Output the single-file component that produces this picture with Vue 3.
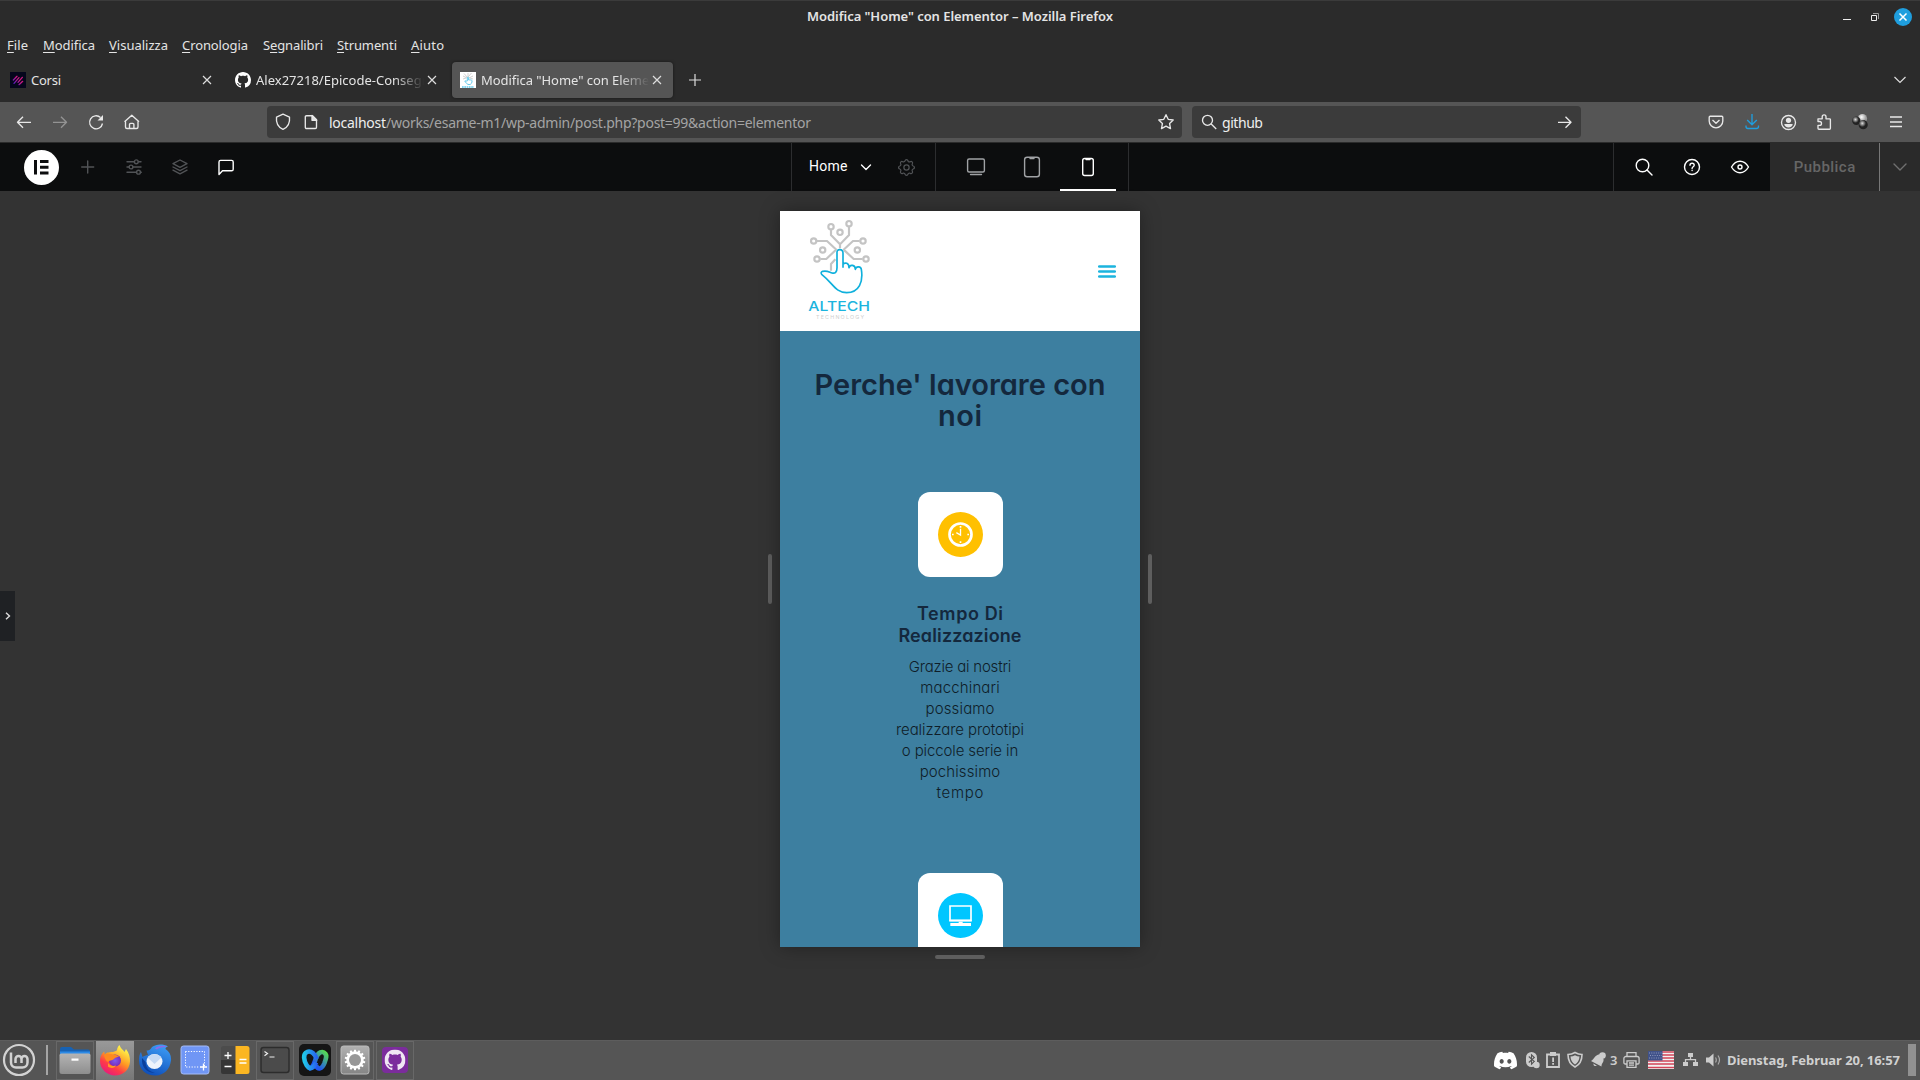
<script setup>
// Spreads a label's letters so that it takes the given width in px.
const vFit = {
  mounted(el, { value }) {
    const n = el.textContent.length
    if (n < 2) return
    const natural = el.getBoundingClientRect().width
    el.style.letterSpacing = ((value - natural) / (n - 1)).toFixed(3) + 'px'
    el.style.marginRight = (-(value - natural) / (n - 1)).toFixed(3) + 'px'
  },
}

const menus = [
  { pre: '', key: 'F', rest: 'ile', w: 21, box: 36 },
  { pre: '', key: 'M', rest: 'odifica', w: 52, box: 66 },
  { pre: '', key: 'V', rest: 'isualizza', w: 59, box: 73 },
  { pre: '', key: 'C', rest: 'ronologia', w: 66, box: 81 },
  { pre: 'S', key: 'e', rest: 'gnalibri', w: 60, box: 74 },
  { pre: '', key: 'S', rest: 'trumenti', w: 60, box: 74 },
  { pre: '', key: 'A', rest: 'iuto', w: 33, box: 40 },
]

const body = [
  ['Grazie ai nostri', 102.5],
  ['macchinari', 79.5],
  ['possiamo', 69],
  ['realizzare prototipi', 128],
  ['o piccole serie in', 116.5],
  ['pochissimo', 80.5],
  ['tempo', 47],
]

const github =
  'M8 0C3.58 0 0 3.58 0 8c0 3.54 2.29 6.53 5.47 7.59.4.07.55-.17.55-.38 0-.19-.01-.82-.01-1.49-2.01.37-2.53-.49-2.69-.94-.09-.23-.48-.94-.82-1.13-.28-.15-.68-.52-.01-.53.63-.01 1.08.58 1.23.82.72 1.21 1.87.87 2.33.66.07-.52.28-.87.51-1.07-1.78-.2-3.64-.89-3.64-3.95 0-.87.31-1.59.82-2.15-.08-.2-.36-1.02.08-2.12 0 0 .67-.21 2.2.82.64-.18 1.32-.27 2-.27.68 0 1.36.09 2 .27 1.53-1.04 2.2-.82 2.2-.82.44 1.1.16 1.92.08 2.12.51.56.82 1.27.82 2.15 0 3.07-1.87 3.75-3.65 3.95.29.25.54.73.54 1.48 0 1.07-.01 1.93-.01 2.2 0 .21.15.46.55.38A8.013 8.013 0 0016 8c0-4.42-3.58-8-8-8z'
const discord =
  'M20.317 4.3698a19.7913 19.7913 0 00-4.8851-1.5152.0741.0741 0 00-.0785.0371c-.211.3753-.4447.8648-.6083 1.2495-1.8447-.2762-3.68-.2762-5.4868 0-.1636-.3933-.4058-.8742-.6177-1.2495a.077.077 0 00-.0785-.037 19.7363 19.7363 0 00-4.8852 1.515.0699.0699 0 00-.0321.0277C.5334 9.0458-.319 13.5799.0992 18.0578a.0824.0824 0 00.0312.0561c2.0528 1.5076 4.0413 2.4228 5.9929 3.0294a.0777.0777 0 00.0842-.0276c.4616-.6304.8731-1.2952 1.226-1.9942a.076.076 0 00-.0416-.1057c-.6528-.2476-1.2743-.5495-1.8722-.8923a.077.077 0 01-.0076-.1277c.1258-.0943.2517-.1923.3718-.2914a.0743.0743 0 01.0776-.0105c3.9278 1.7933 8.18 1.7933 12.0614 0a.0739.0739 0 01.0785.0095c.1202.099.246.1981.3728.2924a.077.077 0 01-.0066.1276 12.2986 12.2986 0 01-1.873.8914.0766.0766 0 00-.0407.1067c.3604.698.7719 1.3628 1.225 1.9932a.076.076 0 00.0842.0286c1.961-.6067 3.9495-1.5219 6.0023-3.0294a.077.077 0 00.0313-.0552c.5004-5.177-.8382-9.6739-3.5485-13.6604a.061.061 0 00-.0312-.0286zM8.02 15.3312c-1.1825 0-2.1569-1.0857-2.1569-2.419 0-1.3332.9555-2.4189 2.157-2.4189 1.2108 0 2.1757 1.0952 2.1568 2.419 0 1.3332-.9555 2.4189-2.1569 2.4189zm7.9748 0c-1.1825 0-2.1569-1.0857-2.1569-2.419 0-1.3332.9554-2.4189 2.1569-2.4189 1.2108 0 2.1757 1.0952 2.1568 2.419 0 1.3332-.946 2.4189-2.1568 2.4189Z'

const gear = (teeth, rOut, rIn, c) => {
  const pts = []
  for (let i = 0; i < teeth; i++) {
    for (const [f, r] of [[-0.3, rIn], [-0.2, rOut], [0.2, rOut], [0.3, rIn]]) {
      const a = ((i + f) / teeth) * Math.PI * 2
      pts.push((c + r * Math.sin(a)).toFixed(2) + ',' + (c - r * Math.cos(a)).toFixed(2))
    }
  }
  return pts.join(' ')
}
const settingsGear = gear(14, 10.4, 8.6, 16)
const nodes = [[183, 80], [237, 71], [131, 123], [279, 123], [141, 177], [288, 177], [210, 97], [158, 150], [262, 150]]
</script>

<template>
  <div class="screen">
    <header class="titlebar">
      <span class="win-title"><span v-fit="306">Modifica "Home" con Elementor – Mozilla Firefox</span></span>
      <div class="win-btns">
        <svg width="10" height="10" viewBox="0 0 10 10"><rect x="1" y="7" width="8" height="1" fill="#eee" /></svg>
        <svg class="restore" width="10" height="10" viewBox="0 0 10 10" fill="none"><path d="M1.500 3.500h5v5h-5z" stroke="#eee" /><path d="M3 1.500h5.500v5.500" stroke="#999" /></svg>
        <svg width="18" height="18" viewBox="0 0 18 18"><circle cx="9" cy="9" r="9" fill="#1f9ede" /><path d="M5.500 5.500l7 7m0-7l-7 7" stroke="#fff" stroke-width="1.500" /></svg>
      </div>
    </header>

    <nav class="menubar">
      <div v-for="m in menus" :key="m.rest" class="menu" :style="{ width: m.box + 'px' }">
        <span v-fit="m.w">{{ m.pre }}<u>{{ m.key }}</u>{{ m.rest }}</span>
      </div>
    </nav>

    <div class="tabs">
      <div class="tab">
        <svg width="16" height="16" viewBox="0 0 48 48">
          <defs><linearGradient id="ep" gradientUnits="userSpaceOnUse" x1="10" y1="38" x2="38" y2="12"><stop offset=".1" stop-color="#5a1cc0" /><stop offset=".6" stop-color="#d01880" /></linearGradient></defs>
          <rect width="48" height="48" fill="#05061c" />
          <path d="M10 24l11-11M12 34L27 17M24 31L37 16M27 38l11-10" stroke="url(#ep)" stroke-width="4" fill="none" stroke-linecap="round" />
        </svg>
        <div class="tab-text"><span v-fit="30">Corsi</span></div>
        <svg class="close" width="10" height="10" viewBox="0 0 10 10"><path d="M1 1l8 8m0-8l-8 8" /></svg>
      </div>
      <div class="tab">
        <svg width="16" height="16" viewBox="0 0 16 16"><path :d="github" fill="#fff" /></svg>
        <div class="tab-text cut"><span v-fit="181">Alex27218/Epicode-Consegne</span></div>
        <svg class="close" width="10" height="10" viewBox="0 0 10 10"><path d="M1 1l8 8m0-8l-8 8" /></svg>
      </div>
      <div class="tab active">
        <svg width="16" height="16" viewBox="0 0 16 16">
          <rect width="16" height="16" fill="#fff" />
          <path d="M4 1.500l3.500 4M11.500 1l-3.500 4M3 4l4 2M13 4L9 6M8 1v4M3 7l3-1M13 7L9.500 6" stroke="#ccc" stroke-width=".9" />
          <path d="M7.300 9V5.500q.7-.8 1.300 0V8c1.500-.3 3 0 3.500.6 0 2-.8 4-3 4-2 0-3.300-2-4.300-3.600 1-.5 1.700.4 2.500 0z" stroke="#5fc8ea" fill="none" />
          <path d="M2 15h12" stroke="#5fc8ea" stroke-width="1.300" stroke-dasharray="1.700 .6" />
        </svg>
        <div class="tab-text cut"><span v-fit="194">Modifica "Home" con Elementor</span></div>
        <svg class="close" width="10" height="10" viewBox="0 0 10 10"><path d="M1 1l8 8m0-8l-8 8" /></svg>
      </div>
      <svg class="new-tab" width="14" height="14" viewBox="0 0 14 14"><path d="M7 1v12M1 7h12" /></svg>
      <svg class="tab-list" width="14" height="14" viewBox="0 0 14 14"><path d="M1.500 4l5.500 5.500L12.500 4" /></svg>
    </div>

    <div class="toolbar">
      <div class="icons nav">
        <svg viewBox="0 0 20 20"><path d="M17 10.300H3.500M9 4.800L3.500 10.300 9 15.800" /></svg>
        <svg viewBox="0 0 20 20" class="off"><path d="M3 10.300h13.500M11 4.800l5.500 5.500-5.500 5.500" /></svg>
        <svg viewBox="0 0 20 20"><path d="M16.500 11.500a6.500 6.500 0 1 1-2-6" /><path d="M17 3v5.500h-5.500z" fill="#e8e8e8" stroke="none" /></svg>
        <svg viewBox="0 0 20 20"><path d="M3.500 9.500V15a1.500 1.500 0 0 0 1.500 1.500h9.500A1.500 1.500 0 0 0 16 15V9.500M2.500 9.800L9.800 3.200 17 9.800M7.500 16.500v-4a1.200 1.200 0 0 1 1.200-1.200h2a1.200 1.200 0 0 1 1.200 1.200v4" /></svg>
      </div>
      <div class="field url">
        <svg viewBox="0 0 20 20"><path d="M10 2.200l6.500 2.900c.5 4.500-1.200 9.900-6.500 12.300C4.700 15 3 9.600 3.500 5.100z" /></svg>
        <svg viewBox="0 0 20 20" class="doc"><path d="M5.500 3.700h6l4 4v7.600a1.200 1.200 0 0 1-1.200 1.200H5.500a1.200 1.200 0 0 1-1.200-1.200V4.900a1.200 1.200 0 0 1 1.200-1.200z" /><path d="M11 3.500v4.700h4.700z" fill="#ddd" /></svg>
        <span v-fit="57" class="host">localhost</span><span v-fit="425" class="path">/works/esame-m1/wp-admin/post.php?post=99&amp;action=elementor</span>
        <svg viewBox="0 0 20 20" class="star"><path d="M10 2.700l2.200 4.600 5 .7-3.600 3.600.9 5-4.500-2.400-4.500 2.400.9-5L2.800 8l5-.7z" /></svg>
      </div>
      <div class="field search">
        <svg viewBox="0 0 20 20"><circle cx="8.500" cy="8.300" r="5" /><path d="M12.200 12l5 5" /></svg>
        <span v-fit="41" class="host">github</span>
        <svg viewBox="0 0 20 20" class="go"><path d="M3 10.300h13M10.500 4.800L16 10.300l-5.500 5.500" /></svg>
      </div>
      <div class="icons ext">
        <svg viewBox="0 0 20 20"><path d="M4.200 4.200h11.600a1 1 0 0 1 1 1V9a6.800 6.800 0 0 1-13.600 0V5.200a1 1 0 0 1 1-1zM6.500 8l3.500 3.300L13.500 8" /></svg>
        <svg viewBox="0 0 20 20" class="dl"><path d="M10 2v10.500M5.200 8l4.800 4.800L14.800 8M4 13.500v1a2 2 0 0 0 2 2h8.500a2 2 0 0 0 2-2v-1" /></svg>
        <svg viewBox="0 0 20 20"><circle cx="10.500" cy="10.500" r="7" /><circle cx="10.500" cy="8.300" r="2.600" fill="#e8e8e8" stroke="none" /><path d="M6.300 12h8.400c0 2-2 3.500-4.200 3.500s-4.200-1.500-4.200-3.500z" fill="#e8e8e8" stroke="none" /></svg>
        <svg viewBox="0 0 20 20"><path d="M4 6.800h4.200V4.700a1.900 1.900 0 0 1 3.800 0v2.100h3.500a.9.900 0 0 1 .9.900v8.600a.9.900 0 0 1-.9.900H4.900a.9.900 0 0 1-.9-.9v-3h1.600a1.900 1.900 0 0 0 0-3.800H4z" /></svg>
        <svg viewBox="0 0 20 20" class="balls">
          <defs>
            <radialGradient id="b1" cx=".4" cy=".35"><stop offset="0" stop-color="#fff" /><stop offset="1" stop-color="#999" /></radialGradient>
            <radialGradient id="b2" cx=".4" cy=".35"><stop offset="0" stop-color="#ddd" /><stop offset=".8" stop-color="#222" /></radialGradient>
          </defs>
          <circle cx="12.500" cy="6.500" r="4.600" fill="url(#b1)" /><circle cx="6.300" cy="8.800" r="4.200" fill="url(#b2)" /><circle cx="13.200" cy="12.700" r="4.600" fill="url(#b2)" />
        </svg>
        <svg viewBox="0 0 20 20"><path d="M4 5h12M4 10h12M4 14.500h12" /></svg>
      </div>
    </div>

    <div class="ebar">
      <svg class="elogo" width="35" height="35" viewBox="0 0 35 35"><circle cx="17.500" cy="17.500" r="17.500" fill="#fff" /><path d="M10 10h3v14.500h-3zM16 10h8.500v3H16zM16 15.700h8.500v3H16zM16 21.500h8.500v3H16z" fill="#0c0d0e" /></svg>
      <div class="tools">
        <svg class="dim" viewBox="0 0 24 24"><path d="M11.700 6v12M5.700 12h12" /></svg>
        <svg class="dim" viewBox="0 0 24 24"><path d="M5 6.800h7.500M16.500 6.800H19M5 12h2M11 12h8M5 17.200h9.500M18.500 17.200h.8" /><circle cx="14.300" cy="6.800" r="1.900" /><circle cx="9" cy="12" r="1.900" /><circle cx="16.500" cy="17.200" r="1.900" /></svg>
        <svg class="dim" viewBox="0 0 24 24"><path d="M12 5l7 3.700-7 3.700-7-3.700zM5 12l7 3.700 7-3.700M5 15.200l7 3.700 7-3.700" /></svg>
        <svg viewBox="0 0 24 24"><path d="M5 19.500V7a1.600 1.600 0 0 1 1.600-1.600h11A1.600 1.600 0 0 1 19.200 7v7.200a1.600 1.600 0 0 1-1.600 1.600H8.500z" /></svg>
      </div>
      <div class="page">
        <span v-fit="38.500">Home</span>
        <svg class="chev" width="14" height="14" viewBox="0 0 14 14"><path d="M2.500 5L7 9.500 11.500 5" /></svg>
        <svg class="dim" width="21" height="21" viewBox="0 0 24 24">
          <path d="M10.300 4.300c.4-1.700 3-1.700 3.400 0a1.700 1.700 0 0 0 2.600 1.100c1.500-1 3.300.8 2.400 2.300a1.700 1.700 0 0 0 1 2.600c1.800.4 1.800 3 0 3.400a1.700 1.700 0 0 0-1 2.600c.9 1.500-.9 3.300-2.400 2.400a1.700 1.700 0 0 0-2.600 1c-.4 1.800-3 1.800-3.400 0a1.700 1.700 0 0 0-2.600-1c-1.500.9-3.300-.9-2.400-2.400a1.700 1.700 0 0 0-1-2.600c-1.800-.4-1.800-3 0-3.400a1.700 1.700 0 0 0 1-2.600c-.9-1.500.9-3.300 2.400-2.300 1 .6 2.300 0 2.600-1.100z" /><circle cx="12" cy="12" r="3" />
        </svg>
      </div>
      <div class="devices">
        <div class="dev"><svg viewBox="0 0 24 24"><rect x="3.600" y="4" width="16.800" height="13" rx="1.500" /><path d="M6.500 19.500h11" /></svg></div>
        <div class="dev"><svg viewBox="0 0 24 24"><rect x="4.600" y="2.200" width="14.800" height="19.600" rx="2.500" /><path d="M10 3.500h4" /></svg></div>
        <div class="dev on"><svg viewBox="0 0 24 24"><rect x="6.700" y="3.500" width="10.600" height="17" rx="2" /><path d="M10 4.500h4" /></svg></div>
      </div>
      <div class="eright">
        <div class="act"><svg viewBox="0 0 24 24"><circle cx="10.500" cy="10.500" r="6.300" /><path d="M15 15l5 5" /></svg></div>
        <div class="act"><svg viewBox="0 0 24 24"><circle cx="12" cy="12" r="7.500" /><path d="M10 10.200c0-2.600 4.200-2.600 4.200 0 0 1.500-2.100 1.500-2.100 3.200M12.100 15.300v.2" /></svg></div>
        <div class="act"><svg viewBox="0 0 24 24"><path d="M3.500 12c4.500-7.600 12.500-7.600 17 0-4.500 7.600-12.500 7.600-17 0z" /><circle cx="12" cy="12" r="2" /></svg></div>
      </div>
      <div class="publish"><span v-fit="61.500">Pubblica</span></div>
      <div class="pubmore"><svg width="16" height="16" viewBox="0 0 16 16"><path d="M2 5l6 6 6-6" /></svg></div>
    </div>

    <main class="canvas">
      <div class="toggle"><svg width="6" height="8" viewBox="0 0 6 8"><path d="M1 .7L4.500 4 1 7.300" /></svg></div>
      <div class="stage">
        <div class="stage-row">
          <i class="handle v"></i>
          <div class="phone">
            <div class="site-head">
              <svg class="brand-logo" width="66" height="106" viewBox="111 51 198 318" fill="none">
                <g stroke="#c4c4c4" stroke-width="6.500">
                  <circle v-for="(n, i) in nodes" :key="i" :cx="n[0]" :cy="n[1]" r="8" />
                  <path d="M183 90v15l27 28M237 81v24l-27 28v12M141 123h30l29 27M269 123h-20l-29 27M151 177h18l29-28M278 177h-27l-30-28M183 212v-20l13-14" />
                </g>
                <path stroke="#0fb0dc" stroke-width="5" stroke-linejoin="round" d="M219 203v-43q0-11-9.500-11T201 160v43c0 14-6 18-15 16-9-3-15-8-28-5q-7 3-3 9c35 28 42 55 75 55 38 0 50-33 44-70-1-8-15-12-18 0 0-14-16-16-19-5 0-15-12-16-17-11" />
                <text x="115" y="333" textLength="185" lengthAdjust="spacingAndGlyphs" class="brand">ALTECH</text>
                <text x="138" y="357" textLength="144" class="sub">TECHNOLOGY</text>
              </svg>
              <svg class="burger" width="18" height="14" viewBox="0 0 18 14"><path d="M1.200 1.500h15.600M1.200 6.500h15.600M1.200 11.600h15.600" stroke="#1cb4de" stroke-width="2.500" stroke-linecap="round" /></svg>
            </div>
            <div class="section">
              <h2><span v-fit="291">Perche' lavorare con</span><br /><span v-fit="44">noi</span></h2>
              <div class="card">
                <svg width="45" height="45" viewBox="0 0 135 135" fill="none" stroke="#fff">
                  <circle cx="67.500" cy="67.500" r="67.500" fill="#ffc000" stroke="none" />
                  <circle cx="67.500" cy="67.500" r="33" stroke-width="8" />
                  <path d="M67.500 50v19L55 62" stroke-width="4" /><path d="M67.500 42v5M67.500 88v5M42 67.500h5M88 67.500h5" stroke-width="5" />
                </svg>
              </div>
              <h3><span v-fit="86">Tempo Di</span><br /><span v-fit="123">Realizzazione</span></h3>
              <p><template v-for="l in body" :key="l[0]"><span v-fit="l[1]">{{ l[0] }}</span><br /></template></p>
              <div class="card second">
                <svg width="45" height="45" viewBox="0 0 135 135" fill="none" stroke="#fff">
                  <circle cx="67.500" cy="67.500" r="67.500" fill="#00c6ff" stroke="none" />
                  <path d="M36 39h63v43H36z" stroke-width="5" /><path d="M34 83h67" stroke-width="5" /><path d="M62 86h12v4H62z" fill="#fff" stroke="none" /><path d="M37 94.500h62" stroke-width="9" />
                </svg>
              </div>
            </div>
          </div>
          <i class="handle v"></i>
        </div>
        <i class="handle h"></i>
      </div>
    </main>

    <footer class="taskbar">
      <svg class="mint" width="34" height="34" viewBox="0 0 34 34" fill="none" stroke="#d2d2d2"><circle cx="17" cy="17" r="15" stroke-width="2.200" /><path d="M9 9.500v10a5 5 0 0 0 5 5h6.500a5 5 0 0 0 5-5V16a3 3 0 0 0-6 0v4M19.500 16a3 3 0 0 0-6 0v4" stroke-width="2.500" /></svg>
      <i class="sep"></i>
      <div class="app framed">
        <svg width="32" height="32" viewBox="0 0 32 32">
          <defs><linearGradient id="fm" x1="0" y1="0" x2="0" y2="1"><stop offset="0" stop-color="#b4b4b4" /><stop offset="1" stop-color="#8e8e8e" /></linearGradient></defs>
          <path d="M1 5a2 2 0 0 1 2-2h9l3 2.500h14a2 2 0 0 1 2 2V12H1z" fill="#1762b4" /><path d="M1 7.500h30V12H1z" fill="#2c8ae6" />
          <path d="M.5 12A2 2 0 0 1 2.500 9.500h27a2 2 0 0 1 2 2.500v15.500A2.500 2.500 0 0 1 29 30H3a2.500 2.500 0 0 1-2.500-2.500z" fill="url(#fm)" /><path d="M12.500 14.500h7v2.200h-7z" fill="#fff" />
        </svg>
      </div>
      <div class="app current">
        <svg width="32" height="32" viewBox="0 0 32 32">
          <defs>
            <linearGradient id="ff1" x1=".8" y1="0" x2=".2" y2="1"><stop offset=".1" stop-color="#fff04a" /><stop offset=".45" stop-color="#ff9a22" /><stop offset=".7" stop-color="#ff3b47" /><stop offset="1" stop-color="#e31587" /></linearGradient>
            <radialGradient id="ff2"><stop offset="0" stop-color="#7a5cf0" /><stop offset="1" stop-color="#7a2bb8" /></radialGradient>
          </defs>
          <path d="M20.500 1c1 3.500 3.500 4.500 5 7l1.500-3c3 4 4.200 8 4 12.500C30.500 26 24 31.500 16 31.500S1 25 1 17c0-4 1.500-7.500 4.200-9.500l.6 3C7 9 8 8.500 9.500 8.500 13 8 17.500 7.500 18 6c.3-2 1-3.800 2.500-5z" fill="url(#ff1)" />
          <circle cx="16" cy="16.500" r="6" fill="url(#ff2)" /><path d="M5 11c3-2 6-1.500 9-.5 3 0 5 1 6 2-2 1-4 1-5 2.500-2 2-5 1-6 3-2-1-3.500-4-4-7z" fill="#ff8a20" /><path d="M9 19c2 3 5 3.500 8 2.500-1 2.500-5 3.500-8 1z" fill="#ff9a22" />
        </svg>
      </div>
      <div class="app">
        <svg width="34" height="32" viewBox="0 0 34 32">
          <defs><linearGradient id="tb" x1=".7" y1="0" x2=".3" y2="1"><stop offset="0" stop-color="#3d9cf5" /><stop offset="1" stop-color="#0d4db8" /></linearGradient></defs>
          <path d="M14 3C18 0 25-.5 30 2.500 28 3 27.500 4 27.500 5c4 2.500 6 6.500 5.500 11.500C32 25 26 31.500 17.500 31.500 8 31.500 1 25.500 1 17c0-4 .5-7 2-9l1.500 5C6 12 8 11 10 11L8.500 6.500C11 7 13 5 14 3z" fill="url(#tb)" />
          <path d="M4 14c-1 9 5 15 13 15-6-1.500-9-5-9.500-11z" fill="#0a3f9c" /><ellipse cx="16.500" cy="17.500" rx="8" ry="7.500" fill="#eef4fc" /><path d="M9.500 13.500l7 6.500 7-6.500c-3-4.500-11-4.500-14 0z" fill="#c5daf4" /><path d="M17 4.500c3-3 9-3.500 12-1.500-4 0-8 .5-10 2.500z" fill="#8d6ae8" />
        </svg>
      </div>
      <div class="app">
        <svg width="32" height="32" viewBox="0 0 32 32"><rect x="2" y="2" width="28" height="28" rx="2.500" fill="#7096f5" stroke="#a6bdf8" /><path d="M6.500 7.500h19v15M6.500 7.500v15.500h14" stroke="#fff" fill="none" stroke-dasharray="1.200 1.500" /><path d="M24.500 19.500v7M21 23h7" stroke="#fff" stroke-width="1.300" /></svg>
      </div>
      <div class="app">
        <svg width="32" height="32" viewBox="0 0 32 32"><rect x="2" y="2" width="28.500" height="28" rx="2.500" fill="#4c4c4c" /><path d="M2 16h15v14H4.500A2.500 2.500 0 0 1 2 27.500z" fill="#363636" /><path d="M16.500 2H28a2.500 2.500 0 0 1 2.500 2.500v23A2.500 2.500 0 0 1 28 30H16.500z" fill="#fbb622" /><path d="M5.500 11.500h7M9 8v7M5.500 22.500h7M20.500 15.500h7M20.500 19h7" stroke="#fff" stroke-width="1.300" /></svg>
      </div>
      <div class="app framed">
        <svg width="32" height="32" viewBox="0 0 32 32" fill="none"><rect x="2" y="3.500" width="28" height="25" rx="2.500" fill="#4b4b4b" stroke="#2c2c2c" stroke-width="1.400" /><path d="M5.500 7.500l3 2-3 2.200M10.500 13h5" stroke="#eee" stroke-width="1.200" /></svg>
      </div>
      <div class="app">
        <svg width="32" height="32" viewBox="0 0 32 32" fill="none">
          <defs>
            <linearGradient id="wx1"><stop offset="0" stop-color="#20c5e8" /><stop offset="1" stop-color="#2864f0" /></linearGradient>
            <linearGradient id="wx2" x1="0" y1="1" x2="1" y2="0"><stop offset=".3" stop-color="#2056f0" /><stop offset="1" stop-color="#58dc50" /></linearGradient>
          </defs>
          <rect width="32" height="32" rx="5" fill="#151515" />
          <path d="M17 21.500c2 4.500 6 4 8.500-2.500 1.500-4.500 2.500-7 1-9-3-4-7.500-1.500-9.500 4-2 5.500-3 10.500-7 10.500" stroke="url(#wx2)" stroke-width="4.600" />
          <path d="M17.500 15c-1-4.500-5.500-9-9.500-7-4.500 2-3 8.500-.5 13 3.500 5.500 7.500 3 9.500-2.500" stroke="url(#wx1)" stroke-width="4.600" />
        </svg>
      </div>
      <div class="app framed">
        <svg width="32" height="32" viewBox="0 0 32 32">
          <defs><linearGradient id="st" x1="0" y1="0" x2="0" y2="1"><stop offset="0" stop-color="#b0b0b0" /><stop offset="1" stop-color="#858585" /></linearGradient></defs>
          <rect x="2" y="2" width="28" height="28" rx="2.500" fill="url(#st)" stroke="#bcbcbc" /><polygon :points="settingsGear" fill="#fff" /><circle cx="16" cy="16" r="6" fill="#989898" />
        </svg>
      </div>
      <div class="app framed">
        <svg width="32" height="32" viewBox="0 0 32 32"><rect x="3" y="3" width="26" height="26" rx="4" fill="#7b2c9c" /><svg x="5.500" y="5.500" width="21" height="21" viewBox="0 0 16 16"><path :d="github" fill="#efe6f3" /></svg></svg>
      </div>

      <div class="tray">
        <svg width="23" height="23" viewBox="0 0 24 24"><path :d="discord" fill="#fff" /></svg>
        <svg class="t-bt" width="14" height="18" viewBox="0 0 14 18"><rect x="0" y="1" width="11" height="15" rx="5.500" fill="#ccc" /><path d="M2.800 5.500l5.500 5-2.800 2.700V3.800L8.300 6.500l-5.500 5" stroke="#555" stroke-width="1.100" fill="none" /><circle cx="10.500" cy="14" r="3.200" fill="#ccc" /></svg>
        <svg class="t-clip" width="14" height="18" viewBox="0 0 14 18"><path d="M1 3.500h12v12.500H1z" fill="none" stroke="#ccc" stroke-width="1.800" /><path d="M4 1h6v4H4zM6.200 6.500h1.800v4.500H6.200zM6.200 12h1.800v1.800H6.200z" fill="#ccc" /></svg>
        <svg class="t-shield" width="16" height="18" viewBox="0 0 16 18"><path d="M8 1.500c2 1.200 4.500 2 7 2 0 5.500-2 10-7 12.500C3 13.500 1 9 1 3.500c2.500 0 5-.8 7-2z" fill="none" stroke="#ccc" stroke-width="1.600" /><path d="M8 4.300c1.500.8 3 1.200 4.500 1.300C12.300 9 11 11.800 8 13.500 5 11.800 3.700 9 3.500 5.600 5 5.500 6.500 5.100 8 4.300z" fill="#ccc" /></svg>
        <svg class="t-bell" width="15" height="18" viewBox="0 0 15 18"><path d="M0 10C3.500 8.500 3.500 4 8.500 3.300l4 4.500C13 12 10.500 12 10.500 15.500z" fill="#ccc" /><circle cx="11.500" cy="4.500" r="3.300" fill="#ccc" /><path d="M2.500 12.500q-.5 3 3.500 2.500z" fill="#ccc" /></svg>
        <span class="count">3</span>
        <svg class="t-print" width="17" height="18" viewBox="0 0 17 18" fill="none" stroke="#ccc" stroke-width="1.300"><path d="M4 5V1.600h9V5M3.500 13H2.200A1.300 1.300 0 0 1 .9 11.700V7.500a2 2 0 0 1 2-2h11.200a2 2 0 0 1 2 2v4.200a1.300 1.300 0 0 1-1.300 1.300h-1.300M4 9.800h9v6.600H4zM6 12h5M6 14.200h5" /></svg>
        <svg class="t-flag" width="26" height="18" viewBox="0 0 26 18"><rect width="26" height="18" fill="#f2f2f2" /><path d="M0 1h26M0 4h26M0 7h26M0 10h26M0 13h26M0 16.500h26" stroke="#d24458" stroke-width="1.500" /><rect width="14.500" height="9.500" fill="#40528a" /><path d="M1 2h13M2 4.500h12M1 7h13" stroke="#8d98bb" stroke-dasharray="1 1.300" /></svg>
        <svg class="t-net" width="15" height="16" viewBox="0 0 15 16"><path d="M5 1h5v4H5zM0 10h5v4H0zM10 10h5v4h-5z" fill="#ccc" /><path d="M7.500 5v2.700M2.500 10V7.700h10V10" stroke="#ccc" stroke-width="1.300" fill="none" /></svg>
        <svg class="t-vol" width="15" height="16" viewBox="0 0 15 16"><path d="M0 5.500h3L7.500 1.500v13L3 10.500H0z" fill="#ccc" /><path d="M9.500 5.500q1.600 2.500 0 5M12 3.500q3 4.500 0 9" stroke="#aaa" stroke-width="1.200" fill="none" /></svg>
        <span class="clock"><span v-fit="173">Dienstag, Februar 20, 16:57</span></span>
        <i class="desk"></i>
      </div>
    </footer>
  </div>
</template>

<style>
body { margin: 0; background: #333; overflow: hidden; }
</style>

<style scoped>
.screen { width: 1920px; height: 1080px; display: flex; flex-direction: column; overflow: hidden; background: #2b2b2b; font-family: "Noto Sans", sans-serif; font-size: 13px; color: #e4e4e4; }
.screen * { box-sizing: border-box; }
svg { display: block; flex: none; }
span { white-space: nowrap; display: inline-block; }
h2, h3, p { margin: 0; font-weight: inherit; }

.titlebar { height: 32px; border-top: 1px solid #3b3b3b; display: grid; grid-template-columns: 1fr auto 1fr; align-items: center; }
.win-title { grid-column: 2; font-weight: 600; line-height: 31px; }
.win-btns { grid-column: 3; justify-self: end; display: flex; align-items: center; padding-right: 8px; }
.win-btns .restore { margin: 0 19px 0 18px; }
.win-btns svg:last-child { margin-left: -5px; }

.menubar { height: 28px; display: flex; padding-left: 7px; }
.menu { line-height: 26px; flex: none; }
.menu u { text-decoration: underline; text-underline-offset: 2px; text-decoration-thickness: 1px; text-decoration-skip-ink: none; }

.tabs { height: 42px; padding-left: 2px; display: flex; gap: 4px; align-items: flex-start; }
.tab { width: 221px; height: 36px; margin-top: 2px; padding-left: 8px; display: flex; align-items: center; border-radius: 4px; flex: none; }
.tab.active { background: #555; box-shadow: 0 0 3px rgba(0, 0, 0, .5); }
.tab-text { width: 168px; margin: 0 3px 0 5px; overflow: hidden; line-height: 36px; flex: none; }
.cut { -webkit-mask-image: linear-gradient(90deg, #000 82%, transparent 100%); mask-image: linear-gradient(90deg, #000 82%, transparent 100%); }
.close path, .new-tab path, .tab-list path { stroke: #ddd; stroke-width: 1.200; fill: none; }
.new-tab { margin: 13px 0 0 11px; }
.tab-list { margin: 13px 13px 0 auto; }

.toolbar { height: 41px; background: #555; border-bottom: 1px solid #2b2b2b; display: flex; align-items: center; flex: none; }
.toolbar svg { width: 20px; height: 20px; fill: none; stroke: #e8e8e8; stroke-width: 1.350; stroke-linejoin: round; }
.icons { display: flex; gap: 16px; }
.nav { padding-left: 14px; }
.icons .off { stroke: #939393; }
.icons .dl { stroke: #1f9ede; }
.icons .balls { stroke: none; }
.field { height: 32px; background: #3b3b3b; border-radius: 4px; display: flex; align-items: center; font-size: 14px; line-height: 32px; }
.field span { padding-top: 1px; }
.url { width: 915px; margin-left: 125px; padding-left: 6px; }
.url .doc { margin: 0 8px; }
.url .star { margin: 0 6px 0 auto; }
.host { color: #eee; }
.path { color: #a4a4a4; }
.search { width: 389px; margin-left: 10px; padding-left: 7px; }
.search .host { margin-left: 3px; }
.search .go { margin: 0 6px 0 auto; }
.ext { margin-left: 125px; }

.ebar { height: 48px; background: #0c0d0e; display: flex; align-items: center; flex: none; font-family: Roboto, sans-serif; }
.ebar svg:not(.elogo) { fill: none; stroke: #fff; stroke-width: 1.400; stroke-linejoin: round; stroke-linecap: round; }
.ebar svg.dim { stroke: #515356 !important; }
.elogo { margin-left: 24px; }
.tools { display: flex; gap: 22px; margin-left: 17px; }
.tools svg, .act svg, .dev svg { width: 24px; height: 24px; }
.page { margin-left: 553px; width: 144px; height: 48px; border-left: 1px solid #2c2d2f; padding-left: 17px; display: flex; align-items: center; font-size: 14px; color: #fff; line-height: 46px; }
.page span { height: 48px; }
.page .chev { margin: 0 23px 0 11px; flex: none; }
.devices { width: 194px; height: 48px; border-left: 1px solid #2c2d2f; border-right: 1px solid #2c2d2f; padding-left: 12px; display: flex; }
.dev { width: 56px; height: 48px; display: flex; align-items: center; justify-content: center; }
.ebar .dev svg { stroke: #a0a2a5; }
.dev.on { border-bottom: 2px solid #fff; padding-top: 2px; }
.ebar .dev.on svg { stroke: #fff; }
.eright { margin-left: auto; width: 157px; height: 48px; border-left: 1px solid #2c2d2f; padding-left: 6px; display: flex; }
.act { width: 48px; height: 48px; display: flex; align-items: center; justify-content: center; }
.publish { width: 109px; height: 48px; background: #2a2a2a; text-align: center; font-weight: 500; font-size: 15px; line-height: 48px; color: #666; }
.pubmore { width: 41px; height: 48px; background: #2a2a2a; border-left: 1px solid #777; display: flex; align-items: center; justify-content: center; }
.ebar .pubmore svg { stroke: #707070; }

.canvas { flex: 1; min-height: 0; background: #333; display: grid; grid-template-columns: 1fr auto 1fr; }
.toggle { width: 15px; height: 50px; margin-top: 400px; background: #1f2124; display: flex; align-items: center; justify-content: center; }
.toggle path { fill: none; stroke: #ddd; stroke-width: 1.400; }
.stage { padding-top: 20px; display: flex; flex-direction: column; align-items: center; }
.stage-row { display: flex; align-items: center; gap: 8px; }
.handle { display: block; background: #5e5e5e; border-radius: 2px; }
.handle.v { width: 4px; height: 50px; }
.handle.h { width: 50px; height: 4px; margin-top: 8px; }
.phone { width: 360px; height: 736px; overflow: hidden; box-shadow: 0 0 18px rgba(0, 0, 0, .35); background: #3d7fa0; font-family: Inter, "Open Sans", sans-serif; font-feature-settings: "cv11"; }
.site-head { height: 120px; background: #fff; padding: 6px 24px 0 27px; display: flex; justify-content: space-between; }
.burger { margin-top: 48px; }
.brand { font-family: Inter, sans-serif; font-weight: 500; font-size: 41px; fill: #1cb4de; }
.sub { font-family: Inter, sans-serif; font-weight: 400; font-size: 16px; fill: #cfcfcf; }
.section { padding-top: 38px; display: flex; flex-direction: column; align-items: center; text-align: center; }
h2 { font-size: 29px; line-height: 31px; font-weight: 600; color: #14283d; }
.card { width: 85px; height: 85px; margin: 61px 0 26px 1px; background: #fff; border-radius: 12px; display: flex; align-items: center; justify-content: center; flex: none; }
h3 { font-size: 18px; line-height: 22px; font-weight: 600; color: #14283d; }
h2 span, h3 span, p span { vertical-align: top; }
p { margin-top: 9px; font-size: 15px; line-height: 21px; font-weight: 300; color: #0f1d28; }
.card.second { margin-top: 70px; margin-bottom: 0; }

.taskbar { height: 40px; background: #555; border-top: 1px solid #5d5d5d; display: flex; align-items: flex-start; flex: none; }
.mint { margin: 2px 0 0 2px; }
.sep { width: 2px; height: 30px; background: #a5a5a5; margin: 4px 8px 0 10px; }
.app { width: 38px; height: 39px; padding-bottom: 1px; margin-right: 2px; display: flex; align-items: center; justify-content: center; flex: none; }
.framed { border: 1px solid #686868; }
.current { background: linear-gradient(#999, #777); }
.tray { margin-left: auto; display: flex; align-items: center; height: 38px; padding-right: 4px; }
.t-bt { margin-left: 9px; }
.t-clip { margin-left: 6px; }
.t-shield { margin-left: 7px; }
.t-bell { margin-left: 8px; }
.count { margin-left: 4px; width: 8px; font-weight: 600; color: #ccc; }
.t-print { margin-left: 5px; }
.t-flag { margin-left: 8px; }
.t-net { margin-left: 9px; }
.t-vol { margin-left: 8px; }
.clock { margin-left: 6px; width: 173px; font-weight: 700; color: #d0d0d0; }
.desk { width: 8px; height: 32px; background: #919191; margin-left: 8px; }
</style>
